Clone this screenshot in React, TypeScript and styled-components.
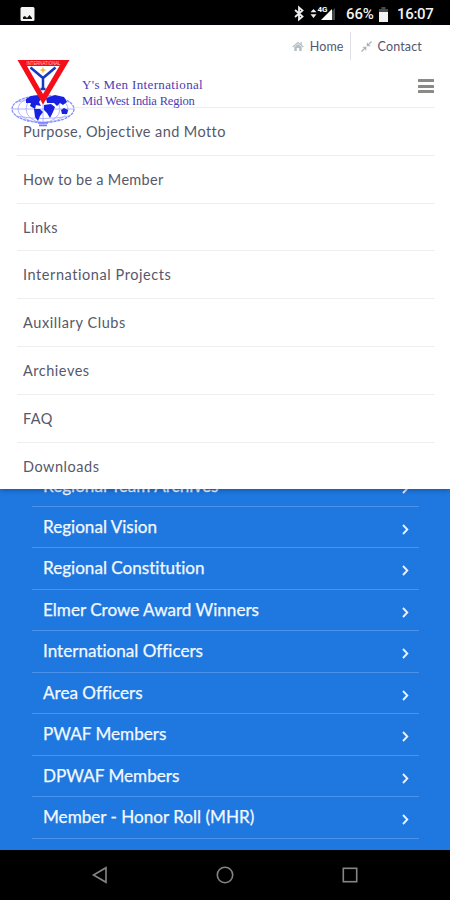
import React from "react";
import styled, { createGlobalStyle } from "styled-components";

const GlobalStyle = createGlobalStyle`
  * { box-sizing: border-box; }
  body { margin: 0; background: #000; font-family: Lato, sans-serif; }
`;

const Screen = styled.div`
  width: 450px;
  height: 900px;
  display: flex;
  flex-direction: column;
  overflow: hidden;
  background: #000;
`;

const StatusBar = styled.div`
  height: 25px;
  flex: none;
  display: flex;
  align-items: center;
  padding: 3px 16px 0 20px;
  color: #f2f2f2;
  font: 500 15px/20px Roboto, sans-serif;
`;

const StatusIcons = styled.div`
  display: flex;
  align-items: center;
  margin-left: auto;
`;

const Percent = styled.span`
  margin-left: 9px;
  width: 29px;
  letter-spacing: -0.1px;
`;

const Clock = styled.span`
  margin-left: 8px;
  width: 37px;
  letter-spacing: -0.3px;
`;

const Battery = styled.svg`
  margin-left: 3px;
`;

const MenuSheet = styled.div`
  height: 464px;
  flex: none;
  background: #fff;
  position: relative;
  z-index: 1;
  box-shadow: 0 1px 5px rgba(0, 20, 80, 0.4);
`;

const TopLinks = styled.div`
  display: flex;
  justify-content: flex-end;
  height: 35px;
  padding: 7px 28px 0 0;
`;

const TopLink = styled.a<{ $divided?: boolean }>`
  display: flex;
  align-items: center;
  height: 28px;
  color: #55566e;
  font-size: 12.5px;
  letter-spacing: 0.15px;
  gap: 6px;
  padding: ${(p) => (p.$divided ? "0 0 0 10px" : "0 6px 0 0")};
  border-left: ${(p) => (p.$divided ? "1px solid #dedfe8" : "0")};
`;

const Brand = styled.div`
  height: 47px;
  display: flex;
  padding: 0 16px 0 10px;
`;

const Logo = styled.svg`
  flex: none;
  overflow: visible;
  position: relative;
  z-index: 1;
`;

const BrandName = styled.div`
  margin: 17px 0 0 6px;
  color: #4a40b4;
  font: 13px/16px "Liberation Serif", serif;
  white-space: nowrap;
`;

const BrandLine = styled.div<{ $size: number; $tracking: number }>`
  font-size: ${(p) => p.$size}px;
  letter-spacing: ${(p) => p.$tracking}px;
`;

const Burger = styled.div`
  margin: 19px 0 0 auto;
  width: 16px;
  display: flex;
  flex-direction: column;
  gap: 2.5px;
`;

const BurgerBar = styled.span`
  height: 3px;
  background: #8a8a88;
  border-radius: 0.5px;
`;

const Menu = styled.nav`
  margin: 0 15px 0 17px;
  height: 382px;
`;

const MenuItem = styled.a<{ $tracking: number }>`
  display: block;
  height: 47.82px;
  padding-left: 6px;
  border-top: 1px solid #eeeef0;
  color: #56586b;
  font-size: 14.5px;
  line-height: 47px;
  letter-spacing: ${(p) => p.$tracking}px;
`;

const Panel = styled.div`
  height: 361px;
  flex: none;
  overflow: hidden;
  background: #1f78e0;
  padding: 0 31px 0 32px;
`;

const PanelList = styled.div`
  margin-top: -23.5px;
`;

const PanelItem = styled.a`
  display: flex;
  justify-content: space-between;
  height: 41.46px;
  padding: 0 9px 0 11px;
  border-bottom: 1px solid #4a92ec;
  color: #f3f8ff;
  font-size: 17.1px;
  line-height: 40px;
  font-variant-ligatures: none;
  -webkit-text-stroke: 0.25px #f3f8ff;
`;

const Chevron = styled.svg`
  margin-top: 17px;
`;

const NavBar = styled.div`
  height: 50px;
  flex: none;
  display: grid;
  grid-template-columns: repeat(3, 125px);
  justify-content: center;
  justify-items: center;
  align-items: center;
`;

const menuItems = [
  { label: "Purpose, Objective and Motto", tracking: 0.41 },
  { label: "How to be a Member", tracking: 0.3 },
  { label: "Links", tracking: 0.48 },
  { label: "International Projects", tracking: 0.57 },
  { label: "Auxillary Clubs", tracking: 0.58 },
  { label: "Archieves", tracking: 0.52 },
  { label: "FAQ", tracking: 0.4 },
  { label: "Downloads", tracking: 0.52 },
];

const panelItems = [
  "Regional Team Archives",
  "Regional Vision",
  "Regional Constitution",
  "Elmer Crowe Award Winners",
  "International Officers",
  "Area Officers",
  "PWAF Members",
  "DPWAF Members",
  "Member - Honor Roll (MHR)",
];

function ClubLogo() {
  return (
    <Logo width="66" height="68" viewBox="0 0 66 68">
      <ellipse cx="33" cy="49" rx="31" ry="13.5" fill="#fff" stroke="#858cff" strokeWidth="1.3" strokeDasharray="3 0.8" />
      <g fill="none" stroke="#9da3ff" strokeWidth="0.8">
        <ellipse cx="33" cy="49" rx="25" ry="13.5" />
        <ellipse cx="33" cy="49" rx="17" ry="13.5" />
        <path d="M2 49H64M6 42Q33 37 60 42M6 56Q33 61 60 56M33 35V64" />
      </g>
      <g fill="#1820e2">
        <path d="M16 39L21 36L29 35L31 39L29 42L31 46L26 45L25 49L20 46L21 43L16 43Z" />
        <path d="M24 49L30 49L33 52L30 56L28 61L25 57Z" />
        <path d="M36 38L45 35L54 37L57 42L53 45L50 43L47 46L44 43L37 43Z" />
        <path d="M34 45L41 44L45 47L43 52L40 58L37 53L34 50Z" />
        <path d="M51 50L54 48L58 50L57 54L52 54Z" />
      </g>
      <path d="M28 63H38M29 65.3H37" stroke="#747bff" strokeWidth="1.7" />
      <path d="M7.5 0H59.5L33 44.5Z" fill="#f50d18" />
      <path d="M17 6H49.5L33 34Z" fill="#fff" />
      <text x="33.5" y="4.9" textAnchor="middle" fill="#ffc5cb" fontFamily="Liberation Sans, sans-serif" fontSize="5" textLength="34" lengthAdjust="spacingAndGlyphs">INTERNATIONAL</text>
      <path d="M20.5 7.5L33 18L45.5 7.5M33 17V30M30.5 29H35.5" fill="none" stroke="#1739c5" strokeWidth="2.5" />
      <path d="M33 7L34 9.2L36.5 10L34 11L33 13.2L32 11L29.5 10L32 9.2Z" fill="#f5b72b" />
    </Logo>
  );
}

export default function App() {
  return (
    <Screen>
      <GlobalStyle />
      <StatusBar>
        <svg width="15" height="15" viewBox="0 0 15 15">
          <rect x="0.5" y="0" width="14" height="14" rx="1.5" fill="#f4f4f4" />
          <path d="M3 12V10L5 9L7 11L9.5 8L12 11V12Z" fill="#111" />
        </svg>
        <StatusIcons>
          <svg width="44" height="18" viewBox="0 0 44 18">
            <path d="M2 5L9.5 11.5L6 14.5V2.5L9.5 5.5L2 12" fill="none" stroke="#eee" strokeWidth="1.8" />
            <path d="M17.5 7.3L20.5 4L23.5 7.3ZM17.5 9.3H23.5L20.5 13Z" fill="#eee" />
            <path d="M42 3V15H38V7Z" fill="#444" />
            <path d="M28 15L39 4V15Z" fill="#fff" />
            <text x="24.5" y="7.2" fill="#fff" fontSize="8" fontWeight="700" fontFamily="Roboto, sans-serif">4G</text>
          </svg>
          <Percent>66%</Percent>
          <Battery width="11" height="17" viewBox="0 0 11 17">
            <path d="M3.5 1H7.5V3H10V7H1V3H3.5Z" fill="#4b4b4b" />
            <path d="M1 6H10V16H1Z" fill="#f2f2f2" />
          </Battery>
          <Clock>16:07</Clock>
        </StatusIcons>
      </StatusBar>

      <MenuSheet>
        <TopLinks>
          <TopLink>
            <svg width="12" height="11" viewBox="0 0 12 11">
              <path d="M0.7 6L6 1.5L11.3 6M9.2 1V4" fill="none" stroke="#b4c0c5" strokeWidth="1.2" />
              <path d="M2.3 6L6 3L9.7 6V10H7.2V7H4.8V10H2.3Z" fill="#b4c0c5" />
            </svg>
            Home
          </TopLink>
          <TopLink $divided>
            <svg width="11" height="11" viewBox="0 0 11 11">
              <path d="M0.5 10.5L4.5 6.5M1.8 6.3H4.8V9.3M10.5 0.5L6.5 4.5M6.3 1.8V4.8H9.3" fill="none" stroke="#a9b1b4" strokeWidth="1.1" />
            </svg>
            Contact
          </TopLink>
        </TopLinks>
        <Brand>
          <ClubLogo />
          <BrandName>
            <BrandLine $size={13} $tracking={0.36}>Y's Men International</BrandLine>
            <BrandLine $size={12.5} $tracking={-0.18}>Mid West India Region</BrandLine>
          </BrandName>
          <Burger>
            <BurgerBar />
            <BurgerBar />
            <BurgerBar />
          </Burger>
        </Brand>
        <Menu>
          {menuItems.map((item) => (
            <MenuItem key={item.label} $tracking={item.tracking}>
              {item.label}
            </MenuItem>
          ))}
        </Menu>
      </MenuSheet>

      <Panel>
        <PanelList>
          {panelItems.map((item) => (
            <PanelItem key={item}>
              {item}
              <Chevron width="9" height="11" viewBox="0 0 9 11">
                <path d="M2 1L6.3 5.5L2 10" fill="none" stroke="#e8f2ff" strokeWidth="1.9" />
              </Chevron>
            </PanelItem>
          ))}
        </PanelList>
      </Panel>

      <NavBar>
        <svg width="18" height="18" viewBox="0 0 18 18">
          <path d="M15 1.7V16.3L2.5 9Z" fill="none" stroke="#858585" strokeWidth="1.6" />
        </svg>
        <svg width="18" height="18" viewBox="0 0 18 18">
          <circle cx="9" cy="9" r="7.7" fill="none" stroke="#858585" strokeWidth="1.6" />
        </svg>
        <svg width="18" height="18" viewBox="0 0 18 18">
          <rect x="2.3" y="2.3" width="13.4" height="13.4" fill="none" stroke="#858585" strokeWidth="1.6" />
        </svg>
      </NavBar>
    </Screen>
  );
}
